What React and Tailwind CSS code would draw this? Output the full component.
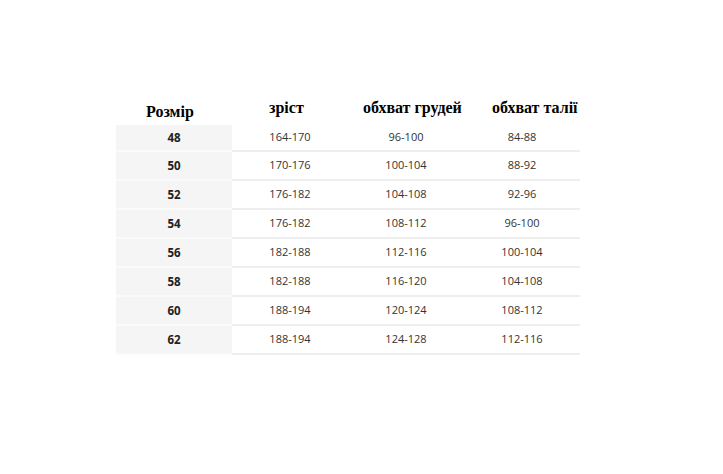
const rows = [
  ["48", "164-170", "96-100", "84-88"],
  ["50", "170-176", "100-104", "88-92"],
  ["52", "176-182", "104-108", "92-96"],
  ["54", "176-182", "108-112", "96-100"],
  ["56", "182-188", "112-116", "100-104"],
  ["58", "182-188", "116-120", "104-108"],
  ["60", "188-194", "120-124", "108-112"],
  ["62", "188-194", "124-128", "112-116"],
];

export default function App() {
  return (
    <div className="w-[723px] h-[474px] bg-white pt-[95px] pl-[116px]">
      <div className="w-[464px]">
        <div
          className="flex h-[30px] text-black font-bold text-[16px] leading-none"
          style={{ fontFamily: '"Liberation Serif", serif' }}
        >
          <div className="w-[116px] flex items-end pl-[30px] pb-[5px]">Розмір</div>
          <div className="w-[116px] flex items-end pl-[37px] pb-[9px]">зріст</div>
          <div className="w-[116px] flex items-end pl-[15px] pb-[9px]">обхват грудей</div>
          <div className="w-[116px] flex items-end pl-[28px] pb-[9px]">обхват талії</div>
        </div>
        <div
          className="text-[11px] text-[#333]"
          style={{ fontFamily: '"Open Sans", sans-serif' }}
        >
          {rows.map((r, i) => (
            <div key={r[0]} className={`flex ${i === 0 ? "h-[27px]" : "h-[29px]"}`}>
              <div className="w-[116px] bg-[#f5f5f5] border-b-2 border-[#fafafa] flex items-center justify-center font-bold text-[#222] text-[11.5px]">
                {r[0]}
              </div>
              <div className="w-[116px] border-b-2 border-[#eeeeee] flex items-center justify-center">{r[1]}</div>
              <div className="w-[116px] border-b-2 border-[#eeeeee] flex items-center justify-center">{r[2]}</div>
              <div className="w-[116px] border-b-2 border-[#eeeeee] flex items-center justify-center">{r[3]}</div>
            </div>
          ))}
        </div>
      </div>
    </div>
  );
}
